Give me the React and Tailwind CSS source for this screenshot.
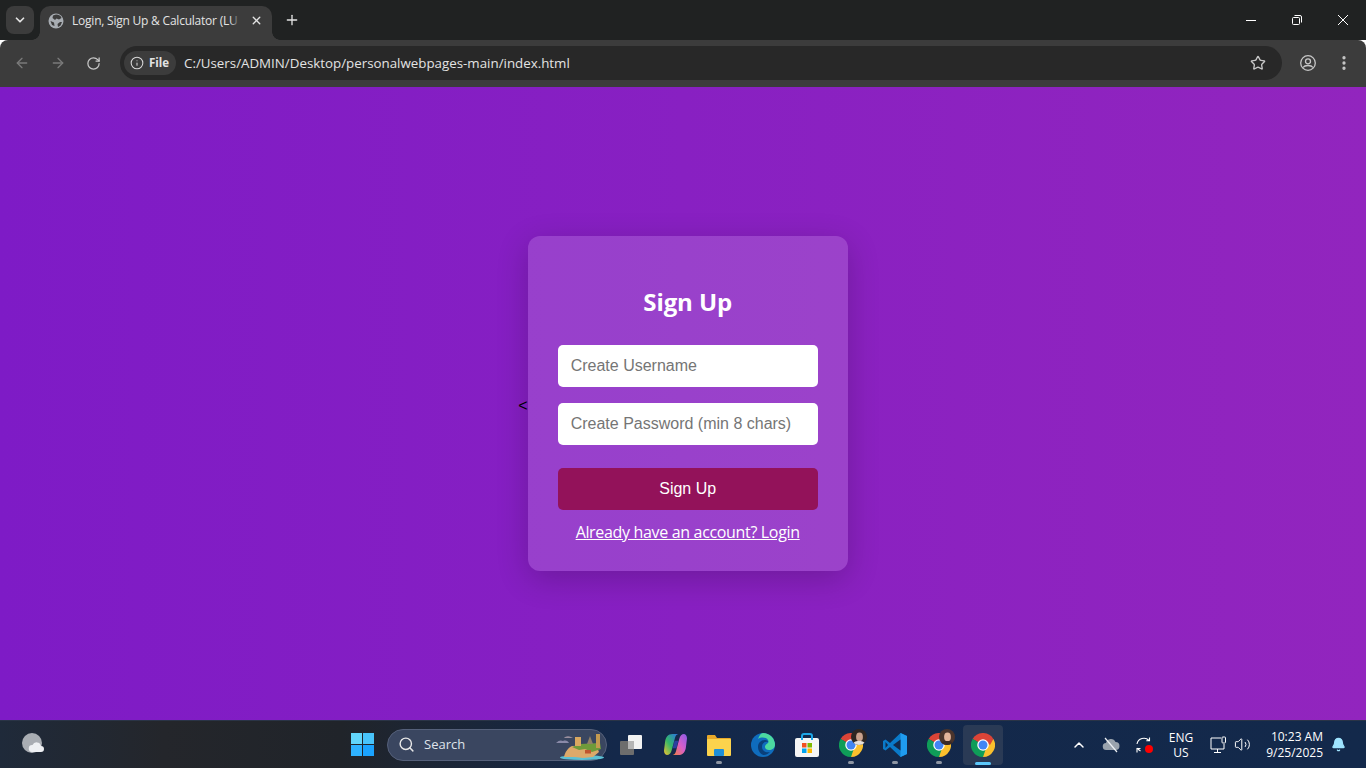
import React from "react";
import { ArrowLeft, ArrowRight, RotateCw, Info, Star, EllipsisVertical, ChevronDown, X, Plus, Search, ChevronUp, Bell, Volume2 } from "lucide-react";

const ui = { fontFamily: '"Open Sans","Noto Sans",sans-serif' };

function ChromeIcon({ size = 24 }) {
  return (
    <svg width={size} height={size} viewBox="0 0 48 48">
      <path d="M24 24 L44.8 12 A24 24 0 0 0 3.2 12 Z" fill="#db4437" />
      <path d="M3.2 12 A24 24 0 0 0 24 48 L34.4 30 Z" fill="#0f9d58" />
      <path d="M44.8 12 A24 24 0 0 1 24 48 L34.4 18 Z" fill="#fbc02d" />
      <path d="M24 12 L44.8 12 L38 24 Z" fill="#db4437" />
      <path d="M13.6 30 L3.2 12 L16 20 Z" fill="#0f9d58" />
      <circle cx="24" cy="24" r="11.5" fill="#fff" />
      <circle cx="24" cy="24" r="9" fill="#4285f4" />
    </svg>
  );
}

function Avatar({ hair, skin, shirt }) {
  return (
    <span className="absolute -top-[4px] -right-[4px] w-4 h-4 rounded-full overflow-hidden flex" style={{ background: hair }}>
      <svg width="16" height="16" viewBox="0 0 16 16">
        <ellipse cx="8.500" cy="8" rx="3.400" ry="4.400" fill={skin} />
        <path d="M2 16c0-3 2-4 6-4s6 1 6 4z" fill={shirt} />
      </svg>
    </span>
  );
}

function Dot() {
  return <span className="absolute bottom-[1px] left-1/2 -translate-x-1/2 w-[6px] h-[3px] rounded-full bg-[#8e96a3]" />;
}

function TaskSlot({ children }) {
  return <div className="relative w-[44px] h-[40px] flex items-center justify-center">{children}</div>;
}

function Flare({ side }) {
  const left = side === "left";
  return (
    <span
      className={`absolute bottom-0 w-[8px] h-[8px] ${left ? "-left-[8px]" : "-right-[8px]"}`}
      style={{ background: `radial-gradient(circle at ${left ? "0 0" : "100% 0"}, transparent 7.5px, #3c3c3c 8px)` }}
    />
  );
}

export default function App() {
  return (
    <div className="w-[1366px] h-[768px] flex flex-col overflow-hidden" style={ui}>
      {/* tab strip */}
      <div className="h-[40px] bg-[#202222] flex items-start text-white shrink-0">
        <div className="mt-[6px] ml-[6px] w-[28px] h-[28px] rounded-lg bg-[#3c3c3c] flex items-center justify-center">
          <ChevronDown size={14} strokeWidth={3} color="#e3e3e3" />
        </div>
        <div className="relative mt-[6px] ml-[6px] w-[232px] h-[34px] rounded-t-[10px] bg-[#3c3c3c] flex items-center pl-[8px] pr-[9px] pb-[5px]">
          <Flare side="left" />
          <Flare side="right" />
          <svg width="16" height="16" viewBox="0 0 16 16">
            <circle cx="8" cy="8" r="7.500" fill="#a8adb3" />
            <path d="M8 1.500c3 0 5 1.500 5.500 3.500L11 6.500 8.500 5.500 7 7 4.500 5 5 2.500zM14 9l-1.500 3.500L10 14l-.5-3L12 9zM2.500 8 6 9.500l.5 3.500L4 12z" fill="#3c3c3c" />
          </svg>
          <span className="relative ml-[8px] whitespace-nowrap text-[12px] text-[#e3e3e3] tracking-[-0.22px]">
            Login, Sign Up &amp; Calculator (LU
            <span className="absolute -right-[2px] top-0 bottom-0 w-[10px] bg-[linear-gradient(90deg,transparent,#3c3c3c)]" />
          </span>
          <span className="ml-auto"><X size={13} strokeWidth={2.5} color="#e3e3e3" /></span>
        </div>
        <div className="ml-[12px] mt-[12px]">
          <Plus size={16} strokeWidth={2} color="#e3e3e3" />
        </div>
        <div className="ml-auto flex items-center h-[40px]">
          <div className="w-[46px] flex justify-center">
            <svg width="10" height="10" viewBox="0 0 10 10"><path d="M0 5.500h10" stroke="#fff" strokeWidth="1" /></svg>
          </div>
          <div className="w-[46px] flex justify-center">
            <svg width="10" height="10" viewBox="0 0 10 10" fill="none" stroke="#fff" strokeWidth="1">
              <rect x=".5" y="2.500" width="7" height="7" rx="1" />
              <path d="M2.500.5h5.500a1.500 1.500 0 0 1 1.500 1.500v5.500" />
            </svg>
          </div>
          <div className="w-[46px] flex justify-center">
            <svg width="10" height="10" viewBox="0 0 10 10" fill="none" stroke="#fff" strokeWidth="1"><path d="M0 0l10 10M10 0 0 10" /></svg>
          </div>
        </div>
      </div>
      {/* toolbar */}
      <div className="h-[47px] bg-[#3c3c3c] rounded-t-[8px] flex items-center shrink-0 pb-[1px]">
        <div className="ml-[14px] w-[16px]"><ArrowLeft size={16} strokeWidth={2} color="#7a7a7a" /></div>
        <div className="ml-[20px] w-[16px]"><ArrowRight size={16} strokeWidth={2} color="#7a7a7a" /></div>
        <div className="ml-[20px] w-[16px]"><RotateCw size={15} strokeWidth={2} color="#c7c7c7" /></div>
        <div className="ml-[18px] w-[1162px] h-[34px] rounded-full bg-[#282828] flex items-center pl-[4px] pr-[16px]">
          <div className="h-[24px] w-[52px] rounded-full bg-[#3c3c3c] flex items-center pl-[6px] gap-[5px]">
            <Info size={14} strokeWidth={1.8} color="#d8d8d8" />
            <span className="text-[11.500px] font-bold text-[#e3e3e3]">File</span>
          </div>
          <span className="ml-[8px] pt-[1px] text-[13.330px] text-[#e3e3e3]">C:/Users/ADMIN/Desktop/personalwebpages-main/index.html</span>
          <span className="ml-auto"><Star size={16} strokeWidth={2} color="#c7c7c7" /></span>
        </div>
        <div className="ml-[18px] flex">
          <svg width="16" height="16" viewBox="0 0 16 16" fill="none" stroke="#c7c7c7" strokeWidth="1.300">
            <circle cx="8" cy="8" r="7.300" />
            <circle cx="8" cy="6.300" r="2.500" />
            <path d="M3 12.500c1-1.500 3-2 5-2s4 .5 5 2" />
          </svg>
        </div>
        <div className="ml-[19px] flex"><EllipsisVertical size={18} strokeWidth={2.4} color="#c7c7c7" /></div>
      </div>
      {/* page */}
      <div className="flex-1 min-h-0 flex items-center justify-center text-black bg-[linear-gradient(90deg,#7e1bc6,#9225be)]" style={{ fontFamily: '"Liberation Sans",sans-serif' }}>
        <span className="mt-[4px]">&lt;</span>
        <div className="w-[320px] h-[335px] rounded-[12px] bg-white/15 p-[30px] shadow-[0_8px_32px_rgba(0,0,0,0.2)] flex flex-col items-stretch">
          <h2 className="mt-[20px] shrink-0 text-[24px] leading-[32px] font-bold text-white text-center tracking-[-0.1px]" style={ui}>Sign Up</h2>
          <input placeholder="Create Username" className="mt-[27px] shrink-0 h-[42px] rounded-[5px] bg-white px-[13px] text-[16px] outline-none placeholder:text-[#757575]" />
          <input placeholder="Create Password (min 8 chars)" className="mt-[16px] shrink-0 h-[42px] rounded-[5px] bg-white px-[13px] text-[16px] outline-none placeholder:text-[#757575]" />
          <button className="mt-[23px] shrink-0 h-[42px] rounded-[5px] bg-[#93125a] text-white text-[16px]">Sign Up</button>
          <a href="#" className="mt-[11px] text-center text-[16px] leading-[22px] text-white underline tracking-[-0.33px]" style={ui}>Already have an account? Login</a>
        </div>
      </div>
      {/* taskbar */}
      <div className="h-[48px] shrink-0 flex items-center relative bg-[linear-gradient(90deg,#1f2a3a_0%,#24262b_12%,#20242a_25%,#14284a_45%,#13294b_100%)] border-t border-[#2a3446]">
        <div className="absolute left-[21px] top-[11px]">
          <svg width="24" height="24" viewBox="0 0 24 24">
            <circle cx="11" cy="11" r="10" fill="#a9adb3" />
            <path d="M11 20a3.500 3.500 0 0 1 .5-7 4.500 4.500 0 0 1 8.500 1 3 3 0 0 1 0 6z" fill="#eef0f3" />
          </svg>
        </div>
        <div className="ml-[351px] w-[23px] h-[23px] grid grid-cols-2 grid-rows-2 gap-[1px]">
          <span className="bg-[#62d6fb]" /><span className="bg-[#48c4fb]" /><span className="bg-[#2eb2ff]" /><span className="bg-[#1aa3ff]" />
        </div>
        <div className="ml-[13px] w-[220px] h-[32px] rounded-full bg-[#3a4660] border border-[#55607a] flex items-center pl-[10px] relative">
          <Search size={17} strokeWidth={2} color="#e8e8e8" />
          <span className="ml-[9px] text-[13px] text-[#dfe3ea]">Search</span>
          <svg className="absolute right-[2px] top-[2px]" width="52" height="28" viewBox="0 0 52 28">
            <path d="M4 11c3-3 5-3 7-2 3-1 5 0 6 2z" fill="#8a8aa8" />
            <path d="M13 5c2-1 4-1 6 0l2 1h-9z" fill="#9a8f9e" />
            <ellipse cx="30" cy="25.500" rx="22" ry="2.500" fill="#5cc0d4" />
            <path d="M12 25c1-5 4-9 8-11l24-1 3 7-6 5-10 1-8-1z" fill="#dca96a" />
            <path d="M20 15l8-3 20-1 1 6-9 3-7-3-6 1z" fill="#6f9a3a" />
            <rect x="23" y="5" width="6" height="9" fill="#d8a860" />
            <path d="M35 12l3-8 3 8z" fill="#8f8066" />
            <rect x="44" y="2" width="4" height="14" fill="#c49a50" />
            <rect x="33" y="18" width="6" height="3.500" fill="#c0552e" />
          </svg>
        </div>
        <div className="ml-[2px] flex items-center">
          <TaskSlot>
            <svg width="24" height="22" viewBox="0 0 24 22">
              <rect x="9" y="1" width="14" height="14" rx="1" fill="#f2f2f2" />
              <rect x="1" y="7" width="14" height="14" rx="1" fill="#6d6d6d" />
              <rect x="9" y="7" width="6" height="8" fill="#b5b5b5" />
            </svg>
          </TaskSlot>
          <TaskSlot>
            <svg width="23" height="21" viewBox="0 0 24 22">
              <defs>
                <linearGradient id="cp1" x1="0" y1="1" x2="1" y2="0"><stop offset="0" stopColor="#f2c230" /><stop offset=".45" stopColor="#35b868" /><stop offset="1" stopColor="#2a6fe8" /></linearGradient>
                <linearGradient id="cp2" x1="1" y1="0" x2="0" y2="1"><stop offset="0" stopColor="#8a5ce8" /><stop offset=".5" stopColor="#d95fc8" /><stop offset="1" stopColor="#f0803c" /></linearGradient>
              </defs>
              <path d="M9 0h6c-2 .500-3 2-3.500 4L8 17c-.8 3-2.500 5-5 5-2.200-.300-3.200-2.500-3-5l1-8C1.500 3.500 4 0 9 0z" fill="url(#cp1)" />
              <path d="M15 22H9c2-.500 3-2 3.500-4L16 5c.8-3 2.500-5 5-5 2.200.300 3.200 2.500 3 5l-1 8c-.5 5.500-3 9-8 9z" fill="url(#cp2)" />
              <path d="M11 7h4l-2 8H9z" fill="#3a4fd8" opacity=".6" />
            </svg>
          </TaskSlot>
          <TaskSlot>
            <svg width="24" height="22" viewBox="0 0 24 22">
              <path d="M0 2a1 1 0 0 1 1-1h7l2 3h13a1 1 0 0 1 1 1v3H0z" fill="#e9a92a" />
              <rect x="0" y="5" width="24" height="17" rx="1" fill="#fcd34d" />
              <rect x="7" y="15" width="10" height="7" rx="1" fill="#1f8fd8" />
            </svg>
            <Dot />
          </TaskSlot>
          <TaskSlot>
            <svg width="24" height="24" viewBox="0 0 24 24">
              <circle cx="12" cy="12" r="12" fill="#0f6cbd" />
              <path d="M12 0a12 12 0 0 1 12 12c0 3-3 5-6 5-2 0-4-1-4-3 0-4 5-3 3-7-2-3-7-3-10-1C8.500 2 10 0 12 0z" fill="#4cd9a0" />
              <path d="M7 14c0-4 3-7 7-7 2 0 3 1 3 2-3-1-6 1-6 5 0 4 4 6 8 5-2 2-4 3-6 3-3 0-6-4-6-8z" fill="#0a3f7a" />
            </svg>
          </TaskSlot>
          <TaskSlot>
            <svg width="24" height="24" viewBox="0 0 24 24">
              <rect x="0" y="5" width="24" height="19" rx="2" fill="#f5f5f5" />
              <path d="M7 7V3a2 2 0 0 1 2-2h6a2 2 0 0 1 2 2v4" fill="none" stroke="#1ea7e8" strokeWidth="2" />
              <rect x="7" y="10" width="4.500" height="4.500" fill="#f25022" />
              <rect x="12.500" y="10" width="4.500" height="4.500" fill="#7fba00" />
              <rect x="7" y="15.500" width="4.500" height="4.500" fill="#00a4ef" />
              <rect x="12.500" y="15.500" width="4.500" height="4.500" fill="#ffb900" />
            </svg>
          </TaskSlot>
          <TaskSlot>
            <span className="relative flex"><ChromeIcon /><Avatar hair="#2e2622" skin="#c9a18c" shirt="#e6e0dc" /></span>
            <Dot />
          </TaskSlot>
          <TaskSlot>
            <svg width="24" height="24" viewBox="0 0 24 24">
              <path d="M17.500 0 24 3v18l-6.500 3L7 14l-4.500 3.500L0 16V8l2.500-1.500L7 10z" fill="#0a7ac9" />
              <path d="M17.500 0 24 3v18l-6.500 3z" fill="#1f9cf0" />
              <path d="M17.500 6.500 10 12l7.500 5.500z" fill="#13294b" />
              <path d="M2.500 9v6L5 12z" fill="#13294b" />
            </svg>
            <Dot />
          </TaskSlot>
          <TaskSlot>
            <span className="relative flex"><ChromeIcon /><Avatar hair="#4a342c" skin="#e3b49a" shirt="#3a2a28" /></span>
            <Dot />
          </TaskSlot>
          <div className="relative ml-[2px] w-[40px] h-[40px] flex items-center justify-center bg-[#2a3a55] rounded-[4px]">
            <ChromeIcon />
            <span className="absolute bottom-[0px] left-1/2 -translate-x-1/2 w-[16px] h-[3px] rounded-full bg-[#5cc8fb]" />
          </div>
        </div>
        <div className="ml-[68px] flex items-center text-white">
          <ChevronUp size={16} strokeWidth={2.2} color="#fff" />
          <svg className="ml-[15px]" width="18" height="16" viewBox="0 0 18 16">
            <path d="M4.500 13a3.500 3.500 0 0 1-.5-7 5 5 0 0 1 9.500-1 4 4 0 0 1 0 8z" fill="#9aa3ad" />
            <path d="M3 1l12 14" stroke="#eef1f5" strokeWidth="1.200" />
          </svg>
          <span className="relative ml-[15px] flex">
            <svg width="18" height="18" viewBox="0 0 18 18" fill="none" stroke="#fff" strokeWidth="1.100">
              <path d="M2 8a7 7 0 0 1 12-3.500M14.500 1.500v3.200h-3.200" />
              <path d="M2.500 12a6.500 6.500 0 0 0 3 3M2 16.500v-4h3.500" />
            </svg>
            <span className="absolute right-0 bottom-[1px] w-[8px] h-[8px] rounded-full bg-[#ff0000]" />
          </span>
          <div className="ml-[14px] w-[28px] text-center text-[12px] leading-[15px] pt-[1px] text-white">ENG<br />US</div>
          <svg className="ml-[15px]" width="17" height="18" viewBox="0 0 17 18" fill="none" stroke="#fff" strokeWidth="1">
            <path d="M11 2H1v11h13V8M7.500 13v3M4 16.500h7" />
            <rect x="12" y="1" width="3.500" height="6" rx=".8" />
          </svg>
          <Volume2 size={17} strokeWidth={1.400} color="#fff" className="ml-[7px]" />
          <div className="ml-[15px] w-[57px] text-right text-[12px] leading-[16px] text-white">
            <div className="whitespace-nowrap">10:23 AM</div>
            <div>9/25/2025</div>
          </div>
          <span className="ml-[8px] flex"><Bell size={15} fill="#9fe4ff" color="#9fe4ff" /></span>
        </div>
      </div>
    </div>
  );
}
